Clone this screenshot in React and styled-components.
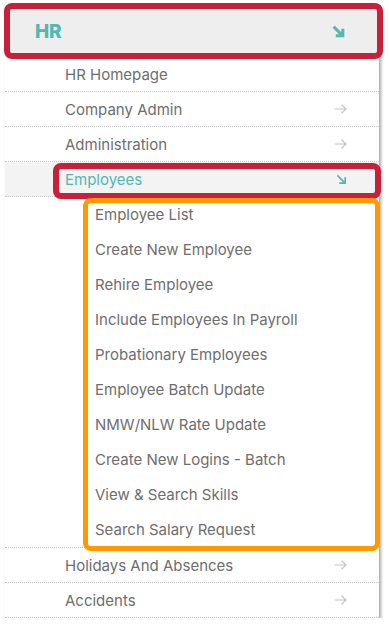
import React from "react";
import styled, { createGlobalStyle } from "styled-components";

const GlobalStyle = createGlobalStyle`
    body {
        margin: 0;
        background: #fff;
        font-family: Inter, "Liberation Sans", sans-serif;
    }
`;

const TEAL = "#52b8b1";

const Panel = styled.div`
    position: relative;
    margin: 5px 0 0 5px;
    width: 374px;
    background: #fff;
    box-shadow: 2px 2px 3px rgba(0, 0, 0, 0.35);
`;

const Header = styled.div`
    display: flex;
    align-items: center;
    justify-content: space-between;
    height: 52px;
    padding: 0 34px 0 30px;
    background: #eeeeee;
    color: ${TEAL};
    font-size: 19px;
    font-weight: 800;
    letter-spacing: -0.3px;
`;

const Row = styled.div`
    display: flex;
    align-items: center;
    justify-content: space-between;
    height: 34px;
    padding: 0 32px 0 60px;
    border-bottom: 1px dotted #c8c8c8;
    background: ${(p) => (p.active ? "#f3f3f3" : "#fff")};
    color: ${(p) => (p.active ? TEAL : "#6e6e6e")};
    font-size: 15px;
`;

const SubList = styled.div`
    display: flex;
    flex-direction: column;
    border-bottom: 1px dotted #c8c8c8;
`;

const SubItem = styled.div`
    display: flex;
    align-items: center;
    height: 35px;
    padding-left: 90px;
    color: #6e6e6e;
    font-size: 15px;
`;

const Marker = styled.div`
    position: absolute;
    box-sizing: border-box;
    border: ${(p) => p.w}px solid ${(p) => p.color};
    border-radius: 8px;
    pointer-events: none;
`;

const ArrowRight = () => (
    <svg width="13" height="10" viewBox="0 0 13 10">
        <path d="M0.5 5 H12 M7.5 0.8 L12 5 L7.5 9.2" fill="none" stroke="#c6c6c6" strokeWidth="1.2" />
    </svg>
);

const ArrowDown = ({ size, stroke }) => (
    <svg width={size} height={size} viewBox="0 0 12 12">
        <path d="M1.5 1.5 L10 10 M10 3.5 V10 H3.5" fill="none" stroke={TEAL} strokeWidth={stroke} />
    </svg>
);

const rows = ["HR Homepage", "Company Admin", "Administration"];
const subItems = [
    "Employee List",
    "Create New Employee",
    "Rehire Employee",
    "Include Employees In Payroll",
    "Probationary Employees",
    "Employee Batch Update",
    "NMW/NLW Rate Update",
    "Create New Logins - Batch",
    "View & Search Skills",
    "Search Salary Request",
];

export default function App() {
    return (
        <>
            <GlobalStyle />
            <Panel>
                <Header>
                    <span>HR</span>
                    <ArrowDown size={13} stroke={2.8} />
                </Header>
                {rows.map((r, i) => (
                    <Row key={r}>
                        <span>{r}</span>
                        {i > 0 && <ArrowRight />}
                    </Row>
                ))}
                <Row active>
                    <span>Employees</span>
                    <ArrowDown size={11} stroke={1.8} />
                </Row>
                <SubList>
                    {subItems.map((s) => (
                        <SubItem key={s}>{s}</SubItem>
                    ))}
                </SubList>
                <Row>
                    <span>Holidays And Absences</span>
                    <ArrowRight />
                </Row>
                <Row>
                    <span>Accidents</span>
                    <ArrowRight />
                </Row>

                {/* annotation boxes drawn over the menu */}
                <Marker color="#c8203a" w={6} style={{ left: -1, top: -2, width: 379, height: 56 }} />
                <Marker color="#c8203a" w={6} style={{ left: 48, top: 158, width: 328, height: 36 }} />
                <Marker color="#ff9900" w={5} style={{ left: 78, top: 193, width: 297, height: 353 }} />
            </Panel>
        </>
    );
}
